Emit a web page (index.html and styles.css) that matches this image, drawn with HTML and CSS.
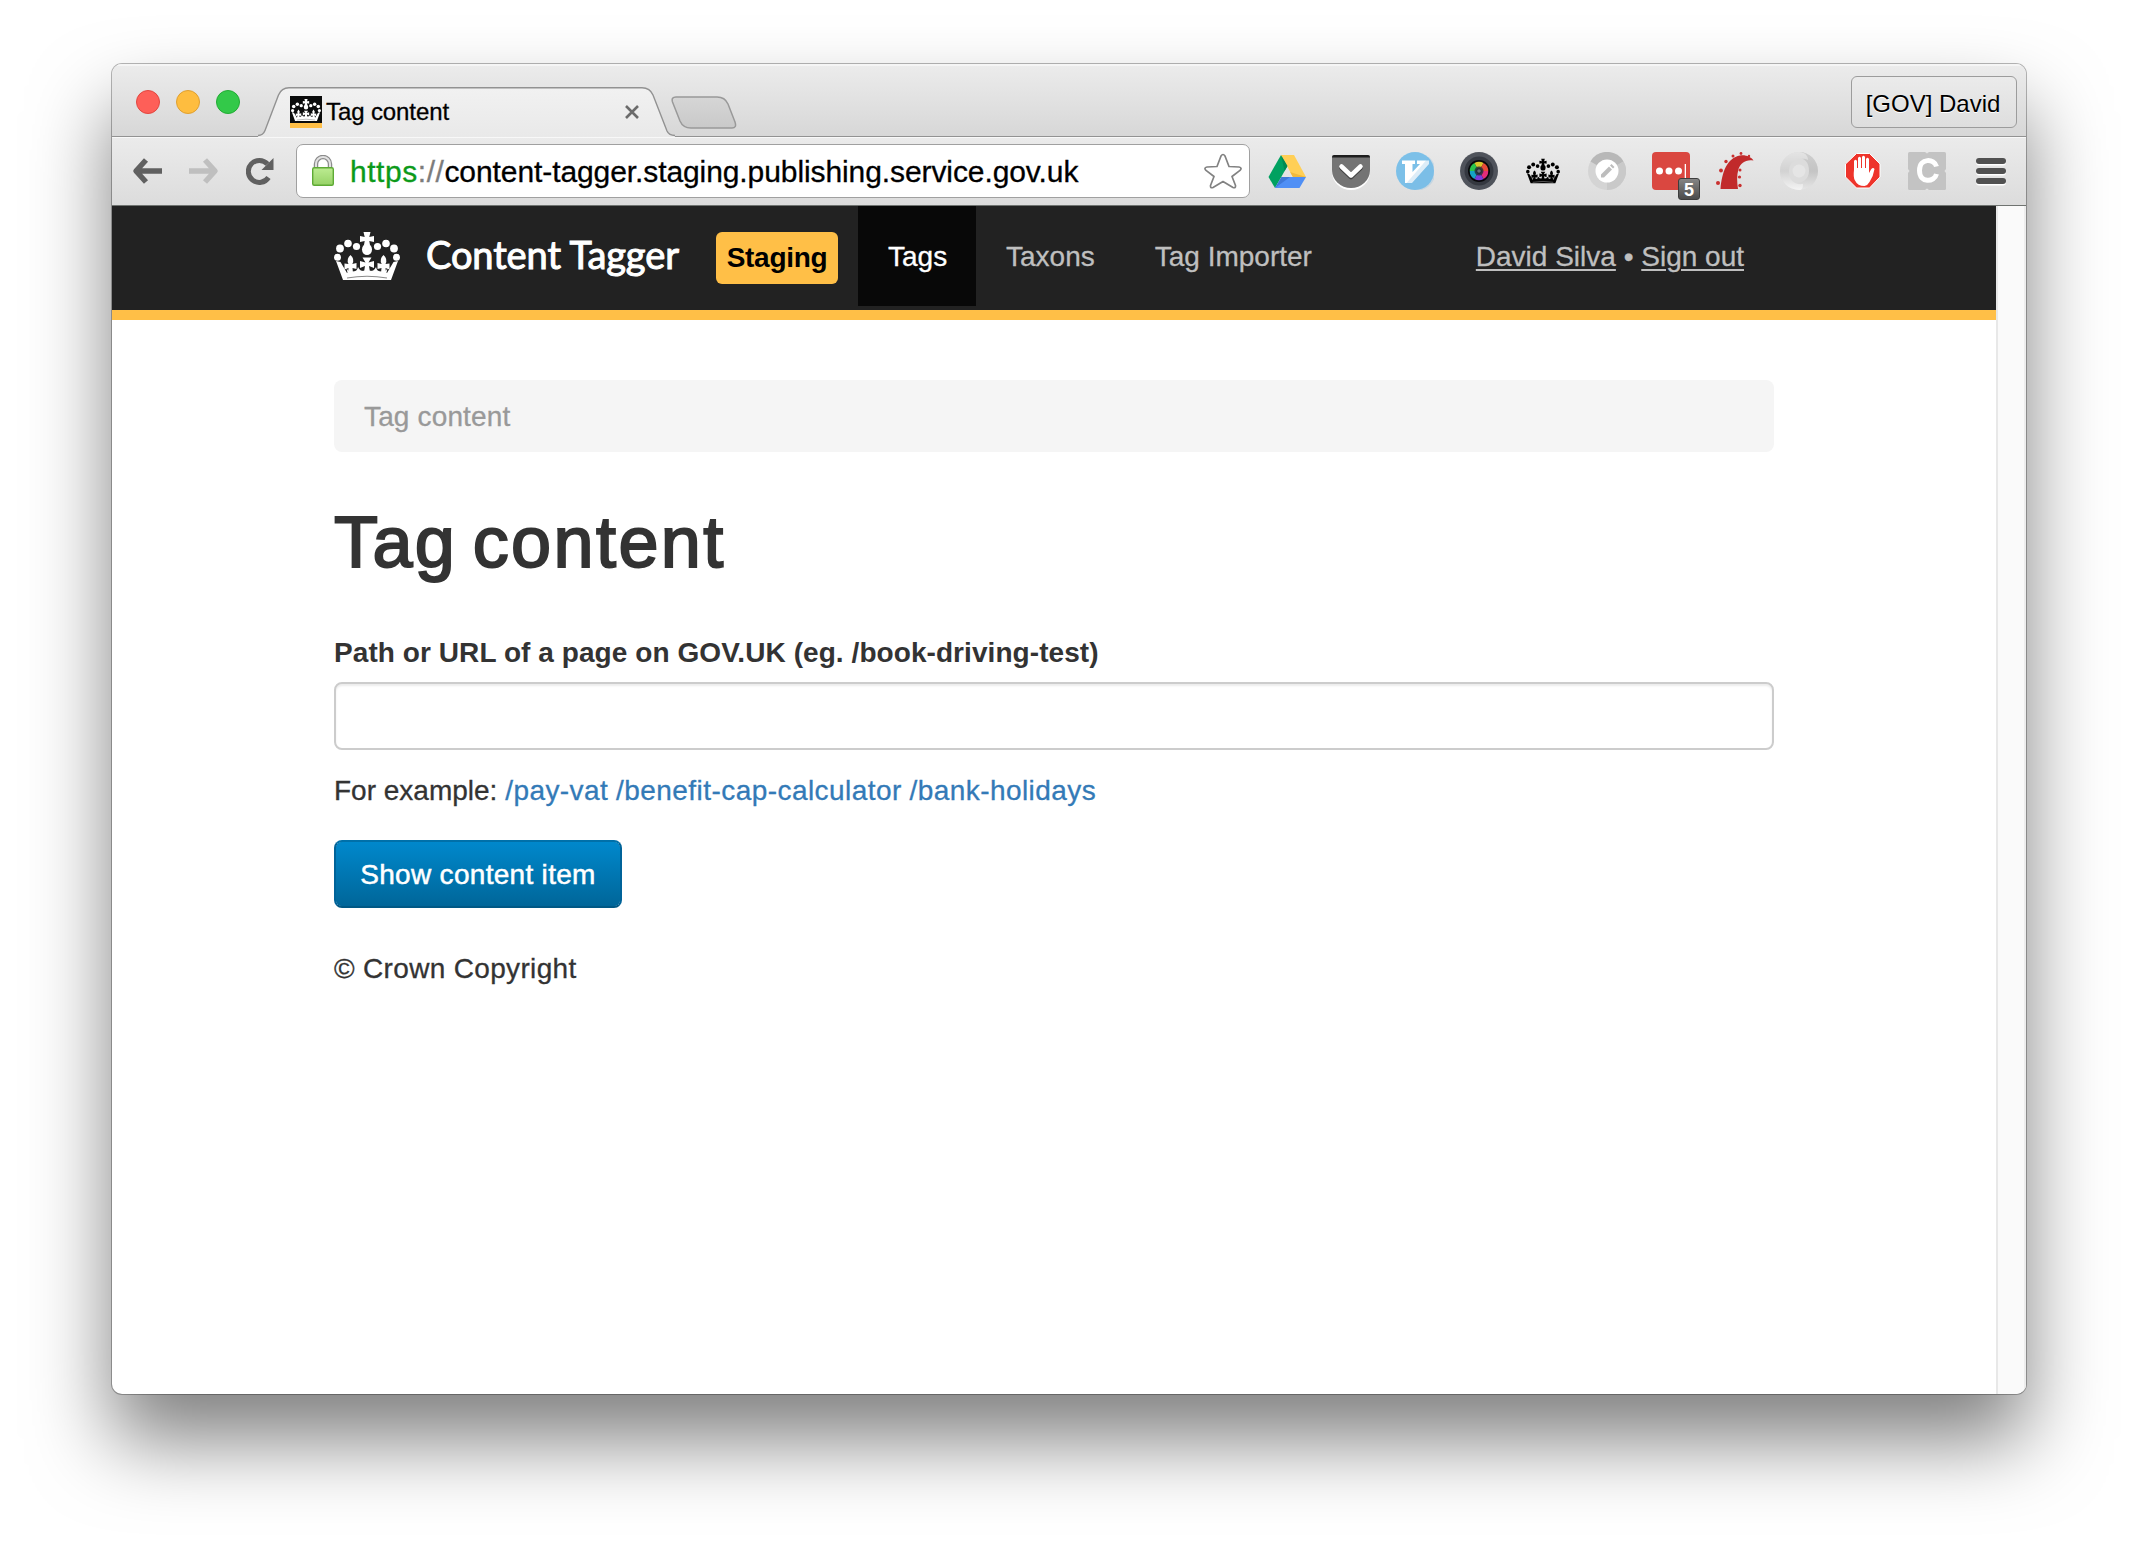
FILE: index.html
```html
<!DOCTYPE html>
<html lang="en">
<head>
<meta charset="utf-8">
<title>Tag content</title>
<link rel="stylesheet" href="styles.css">
</head>
<body>
<svg class="defs" width="0" height="0" aria-hidden="true">
  <symbol id="crown" viewBox="0 0 66 48">
    <path d="M29.500 0h7l-1.200 5 4.700-1v6l-4.700-1 .700 4h-6l.700-4-4.700 1V4l4.700 1z"/>
    <ellipse cx="33" cy="17.500" rx="5" ry="5.500"/>
    <circle cx="22.500" cy="14.500" r="3.600"/><circle cx="43.500" cy="14.500" r="3.600"/>
    <circle cx="14" cy="11.500" r="3.800"/><circle cx="52" cy="11.500" r="3.800"/>
    <circle cx="6" cy="16.500" r="3.900"/><circle cx="60" cy="16.500" r="3.900"/>
    <circle cx="3.500" cy="25.300" r="3.500"/><circle cx="62.500" cy="25.300" r="3.500"/>
    <path d="M2 29l4.500 1L13 41q20-5 40 0l6.500-11 4.500-1-7 19H9z"/>
    <path d="M16.500 23q4.500 4 1.800 9l4.200-1v6l-4-1 .5 5h-5l.5-5-4 1.500v-6l4 .500q-2.500-5 2-9zM49.500 23q-4.500 4-1.800 9l-4.200-1v6l4-1-.5 5h5l-.5-5 4 1.500v-6l-4 .500q2.500-5-2-9z"/>
    <path d="M28.500 25.500h9l-3 5 5.500-1.500v7L35 34l1 6h-6l1-6-5 2v-7l5.500 1.500z"/>
    <path d="M12 34q1 6 6 5.500 5 .5 6-4.500 2 5 9 4.500 7 .5 9-4.500 1 5 6 4.500 5 .5 6-5.500l-2 9H14z"/>
    <path class="crown-slot" d="M13 46q20-3.500 40 0"/>
  </symbol>
</svg>
<div class="window">
  <header class="titlebar">
    <div class="lights"><i class="light red"></i><i class="light amber"></i><i class="light green"></i></div>
    <div class="tab">
      <svg class="tab-shape" width="418" height="50" viewBox="0 0 418 50">
        <defs><linearGradient id="tabfill" x1="0" y1="0" x2="0" y2="1"><stop offset="0" stop-color="#f1f1f1"/><stop offset="1" stop-color="#e9e9e9"/></linearGradient></defs>
        <path d="M0 50v-1.500q5 0 7-5L20.500 8Q23.500.700 31 .700H384q8 0 11 7.300l14 36q2 4.500 8 4.500V50z" fill="url(#tabfill)"/>
        <path d="M0 48.500q5 0 7-5L20.500 8Q23.500.700 31 .700H384q8 0 11 7.300l14 36q2 4.500 8 4.500" fill="none" stroke="#929292" stroke-width="1.400"/>
      </svg>
      <span class="favicon"><svg width="30" height="24"><use href="#crown"/></svg></span>
      <span class="tab-title">Tag content</span>
      <svg class="tab-close" width="14" height="14" viewBox="0 0 14 14"><path d="M1 1l12 12m0-12L1 13" stroke="#6b6b6b" stroke-width="2.600"/></svg>
    </div>
    <svg class="new-tab" width="66" height="34" viewBox="0 0 66 34">
      <defs><linearGradient id="newfill" x1="0" y1="0" x2="0" y2="1"><stop offset="0" stop-color="#d6d6d6"/><stop offset="1" stop-color="#c9c9c9"/></linearGradient></defs>
      <path d="M5 1H46q8 0 11 7l7 18q2 6-3 6H20q-8 0-11-7L1.500 6Q0 1 5 1z" fill="url(#newfill)" stroke="#999" stroke-width="1.500"/>
    </svg>
    <button class="profile">[GOV] David</button>
  </header>

  <div class="toolbar">
    <svg class="back" width="32" height="28" viewBox="0 0 32 28"><path d="M14 3L4 14l10 11M4 14h26" fill="none" stroke="#606060" stroke-width="5.500" stroke-linejoin="round"/></svg>
    <svg class="forward" width="32" height="28" viewBox="0 0 32 28"><path d="M18 3l10 11-10 11M28 14H2" fill="none" stroke="#bfbfbf" stroke-width="5.500" stroke-linejoin="round"/></svg>
    <svg class="reload" width="28" height="28" viewBox="0 0 28 28"><path d="M22.500 20.500a11 11 0 1 1-1-13.500" fill="none" stroke="#606060" stroke-width="5"/><path d="M27.500 1v12H15.500z" fill="#606060"/></svg>
    <div class="address">
      <svg class="lock" width="24" height="32" viewBox="0 0 24 32">
        <defs><linearGradient id="lockfill" x1="0" y1="0" x2="0" y2="1"><stop offset="0" stop-color="#bdec92"/><stop offset="1" stop-color="#96d266"/></linearGradient></defs>
        <path d="M5 13V9a7 7 0 0 1 14 0v4" fill="none" stroke="#8c8c8c" stroke-width="4.500"/>
        <path d="M5 13V9a7 7 0 0 1 14 0v4" fill="none" stroke="#e2e2e2" stroke-width="2"/>
        <rect x="1.700" y="12.700" width="20.600" height="17.600" rx="1.500" fill="url(#lockfill)" stroke="#5eaa35" stroke-width="1.400"/>
      </svg>
      <span class="url"><span class="scheme">https</span><span class="slashes">://</span>content-tagger.staging.publishing.service.gov.uk</span>
      <svg class="star" width="38" height="36" viewBox="0 0 38 36"><path d="M17 3q2-3 4 0l4 10.500 10 .5q3.500.7 1 3.300L28 23.500l3.500 9q.3 3-2.500 2L19 28.500 9 34.500q-2.800 1-2.500-2l3.500-9L2 17.300Q-.5 14.700 3 14l10-.5z" fill="#fff" stroke="#828282" stroke-width="1.700" stroke-linejoin="round"/></svg>
    </div>
    <div class="extensions">
      <svg width="38" height="38" viewBox="0 0 38 38"><path d="M13 3L.500 25 7 36l12.500-22z" fill="#00a160"/><path d="M13 3h13l12 22H25z" fill="#ffcf56"/><path d="M13.500 25H38l-6.500 11H7z" fill="#4f8ff5"/><path d="M13.500 25L7 36l15-11z" fill="#3e78d8"/><path d="M13 3l6.500 11-3 5z" fill="#008a52"/><path d="M25 25h13L22 20z" fill="#f0b93e"/></svg>
      <svg width="38" height="38" viewBox="0 0 38 38"><path d="M0 20a19 18 0 0 0 38 0z" fill="#fff"/><path d="M2 3h34q2 0 2 2v13a19 18 0 0 1-38 0V5q0-2 2-2z" fill="#747474"/><path d="M2 3h34q2 0 2 2.500H0Q0 3 2 3z" fill="#1d1d1d"/><path d="M9.500 16l9.500 9 9.500-9" fill="none" stroke="#444" stroke-width="4.500" stroke-linecap="round" stroke-linejoin="round"/><path d="M9.500 14.500l9.500 9 9.500-9" fill="none" stroke="#fff" stroke-width="4.500" stroke-linecap="round" stroke-linejoin="round"/></svg>
      <svg width="38" height="38" viewBox="0 0 38 38"><circle cx="19" cy="19" r="19" fill="#7cc0e8"/><path d="M6 8.500h13v3.500h-2.500v8L24 12h-3V8.500h12v3.500L16 31H9V12H6z" fill="#fff"/><path d="M33 5a19 19 0 0 1-25 29z" fill="#76b9e2" opacity=".25"/></svg>
      <svg width="38" height="38" viewBox="0 0 38 38"><circle cx="19" cy="19" r="19" fill="#4f535b"/><circle cx="19" cy="19" r="14.500" fill="#343840"/><circle cx="19" cy="19" r="11" fill="#08080a"/><g fill="none" stroke-width="6.500"><path d="M13 19a6 6 0 0 1 3-5.200" stroke="#28c44c"/><path d="M16 13.800a6 6 0 0 1 6 0" stroke="#d8c52c"/><path d="M22 13.800a6 6 0 0 1 3 5.200" stroke="#e84a38"/><path d="M25 19a6 6 0 0 1-3 5.200" stroke="#e42c78"/><path d="M22 24.200a6 6 0 0 1-6 0" stroke="#7a3bd8"/><path d="M16 24.200a6 6 0 0 1-3-5.200" stroke="#16a3c5"/></g><circle cx="19" cy="19" r="4.500" fill="#26303a" opacity=".85"/><circle cx="19" cy="19" r="1.800" fill="#687078"/></svg>
      <svg class="crown-dark" width="38" height="38" viewBox="0 0 38 38"><use href="#crown" x="2" y="5" width="34" height="28"/></svg>
      <svg width="38" height="38" viewBox="0 0 38 38"><circle cx="19" cy="19" r="19" fill="#d4d4d4"/><path d="M19 19L2.500 9.500a19 19 0 0 1 33 0z" fill="#b8b8b8"/><path d="M19 19l16.500-9.500A19 19 0 0 1 19 38z" fill="#c9c9c9"/><circle cx="19" cy="19" r="11.500" fill="#fff"/><path d="M13 22.500l8-8 3 3-8 8h-3zM22 13.500l1.500-1.500 3 3-1.500 1.500z" fill="#bdbdbd"/></svg>
      <div class="lastpass"><svg width="38" height="38" viewBox="0 0 38 38"><rect width="38" height="38" rx="4" fill="#da4740"/><g fill="#fff"><circle cx="7.500" cy="19" r="3.500"/><circle cx="17" cy="19" r="3.500"/><circle cx="26.500" cy="19" r="3.500"/><rect x="32.700" y="12" width="1.300" height="14"/></g></svg><span class="count">5</span></div>
      <svg width="38" height="38" viewBox="0 0 38 38"><path d="M4.500 37C6 20 11 6 24 3.500c6-.8 11 1.500 13.500 5C30 7 24.500 11 22.500 17c-2 7-1.500 13-.5 20z" fill="#c12a2b"/><g fill="#c9302f"><circle cx="2" cy="31" r="2"/><circle cx="5" cy="18.500" r="1.900"/><circle cx="10" cy="9.500" r="1.700"/><circle cx="17" cy="4" r="1.500"/><circle cx="25" cy="1.500" r="1.400"/><circle cx="33" cy="4" r="1.200"/><circle cx="24" cy="18" r="1.500"/><circle cx="23.500" cy="25" r="1.600"/><circle cx="24" cy="33.500" r="1.700"/></g></svg>
      <svg width="38" height="38" viewBox="0 0 38 38">
        <defs>
          <linearGradient id="swirlA" x1="0" y1="0" x2="0" y2="1"><stop offset="0" stop-color="#cfcfcf"/><stop offset=".5" stop-color="#c4c4c4"/><stop offset="1" stop-color="#e6e6e6"/></linearGradient>
          <linearGradient id="swirlB" x1="0" y1="0" x2="0" y2="1"><stop offset="0" stop-color="#e4e4e4"/><stop offset=".5" stop-color="#d2d2d2"/><stop offset="1" stop-color="#f4f4f4"/></linearGradient>
        </defs>
        <circle cx="19" cy="19" r="12.500" fill="none" stroke="#dcdcdc" stroke-width="13"/>
        <path d="M19 0a19 19 0 0 1 0 38c-6 0-9-4-9-8 5 3 19 1 19-11C29 10 24 5 15 6c0-4 1-6 4-6z" fill="url(#swirlA)"/>
        <path d="M19 38a19 19 0 0 1 0-38c6 0 9 4 9 8C23 5 9 7 9 19c0 9 5 14 14 13 0 4-1 6-4 6z" fill="url(#swirlB)"/>
        <circle cx="19" cy="19" r="6.500" fill="#e5e5e5"/>
      </svg>
      <svg width="38" height="38" viewBox="0 0 38 38"><path d="M12.500 1.500h13l10.500 10.500v13L25.500 36h-13L1.500 25V12z" fill="#ee342b" stroke="#fff" stroke-width="1"/><path d="M10 18V9q1.500-2.500 3 0v7h1V6q1.500-2.500 3 0v10h1V5q1.500-2.500 3 0v11h1V7q1.500-2.500 3 0v14l2-3.500q2-2.500 3.500-.5-1 7-5 13-1.500 3-5 4-7 0-9.500-5.500-2-3-1-10.500z" fill="#fff"/></svg>
      <svg width="38" height="38" viewBox="0 0 38 38"><rect width="38" height="38" rx="1.500" fill="#c3c3c3"/><path d="M28.500 14.500c-2-8-17-9-17 4s15 12 17 3.500" fill="none" stroke="#fff" stroke-width="5"/><path d="M17 0h4l-2 1.500zM17 38h4l-2-1.500zM0 17v4l1.500-2zM38 17v4l-1.500-2z" fill="#e3e3e3"/></svg>
      <svg width="38" height="38" viewBox="0 0 38 38"><g fill="#fff"><rect x="4" y="7.500" width="30" height="6" rx="3"/><rect x="4" y="17.500" width="30" height="6" rx="3"/><rect x="4" y="27.500" width="30" height="6" rx="3"/></g><g fill="#515151"><rect x="4" y="6" width="30" height="6" rx="3"/><rect x="4" y="16" width="30" height="6" rx="3"/><rect x="4" y="26" width="30" height="6" rx="3"/></g></svg>
    </div>
  </div>

  <div class="viewport">
    <div class="page">
      <nav class="navbar">
        <a class="brand"><svg class="brand-crown" width="66" height="48"><use href="#crown"/></svg><span class="brand-name">Content Tagger</span></a>
        <span class="environment">Staging</span>
        <ul class="nav"><li class="active">Tags</li><li>Taxons</li><li>Tag Importer</li></ul>
        <p class="account"><a>David Silva</a> • <a>Sign out</a></p>
      </nav>
      <main class="container">
        <div class="breadcrumb">Tag content</div>
        <h1>Tag content</h1>
        <label for="path">Path or URL of a page on GOV.UK (eg. /book-driving-test)</label>
        <input id="path" type="text">
        <p class="help">For example: <a>/pay-vat</a> <a>/benefit-cap-calculator</a> <a>/bank-holidays</a></p>
        <button class="submit">Show content item</button>
        <footer>© Crown Copyright</footer>
      </main>
    </div>
    <div class="scrollbar"></div>
  </div>
</div>
</body>
</html>
```
FILE: styles.css
```css
* { box-sizing: border-box; }
body {
  margin: 0;
  width: 2138px;
  height: 1554px;
  padding: 64px 112px;
  overflow: hidden;
  background: #fff;
  font: 28px/40px "Liberation Sans", Arial, sans-serif;
  color: #333;
}
.defs { position: absolute; }
svg { display: block; flex: none; }
.window {
  width: 1914px;
  height: 1330px;
  display: flex;
  flex-direction: column;
  border-radius: 10px;
  overflow: hidden;
  background: #fff;
  box-shadow: 0 0 0 1px rgba(0, 0, 0, .28), 0 46px 80px rgba(0, 0, 0, .5);
}

/* Window chrome */
.titlebar {
  flex: none;
  height: 73px;
  display: flex;
  align-items: flex-start;
  background: linear-gradient(#ececec, #d7d7d7);
  border-bottom: 1px solid #929292;
  box-shadow: inset 0 2px 0 #f5f5f5;
}
.lights { display: flex; gap: 16px; padding: 26px 0 0 24px; }
.light { width: 24px; height: 24px; border-radius: 50%; border: 1px solid; }
.red { background: #fe5f58; border-color: #e2463f; }
.amber { background: #febd3f; border-color: #e0a030; }
.green { background: #33c949; border-color: #22ac34; }
.tab {
  position: relative;
  width: 416px;
  height: 50px;
  margin: 23px 0 0 18px;
  padding: 9px 35px 0 32px;
  display: flex;
  color: #000;
}
.tab-shape { position: absolute; left: 0; top: 0; }
.favicon {
  position: relative;
  width: 32px;
  height: 32px;
  padding: 2px 1px;
  background: #0b0c0c;
  border-bottom: 5px solid #ffbf47;
  fill: #fff;
}
.tab-title { position: relative; margin-left: 4px; font-size: 24px; line-height: 32px; letter-spacing: -.1px; -webkit-text-stroke: .3px; }
.tab-close { position: relative; margin: 9px 0 0 auto; }
.new-tab { margin: 32px 0 0 -3px; }
.profile {
  width: 166px;
  height: 52px;
  margin: 12px 9px 0 auto;
  padding: 3px 2px 0 0;
  border: 1.5px solid #9c9c9c;
  border-radius: 6px;
  background: linear-gradient(#ebebeb, #dedede);
  font: 24px "Liberation Sans", Arial, sans-serif;
  color: #000;
  text-shadow: 0 1px 0 #fff;
}
.toolbar {
  flex: none;
  height: 69px;
  display: flex;
  align-items: flex-start;
  background: linear-gradient(#ebebeb, #dcdcdc);
  border-bottom: 1px solid #6f7370;
  box-shadow: inset 0 1px 0 #f8f8f8;
}
.back { margin: 20px 0 0 20px; }
.forward { margin: 20px 0 0 23px; }
.reload { margin: 20px 0 0 27px; }
.address {
  width: 954px;
  height: 54px;
  margin: 7px 5px 0 22px;
  padding: 0 7px 0 14px;
  display: flex;
  align-items: center;
  border: 1.5px solid #a0a0a0;
  border-radius: 7px;
  background: #fff;
}
.url { margin: 2px 0 0 15px; font-size: 30px; letter-spacing: -.09px; color: #000; white-space: nowrap; -webkit-text-stroke: .3px; }
.scheme { color: #0c9a1a; letter-spacing: .55px; }
.slashes { color: #7c7c7c; letter-spacing: .55px; }
.star { margin-left: auto; }
.extensions {
  display: grid;
  grid-template-columns: repeat(12, 64px);
  justify-items: center;
  padding-top: 15px;
}
.crown-dark { fill: #000; }
.crown-slot { fill: none; stroke: #8a8a8a; stroke-width: 1.2; }
.lastpass { position: relative; }
.count {
  position: absolute;
  left: 26px;
  top: 26px;
  width: 22px;
  height: 22px;
  border: 1px solid #3d3d3d;
  border-radius: 3px;
  background: linear-gradient(#858585, #4b4b4b);
  font-weight: bold;
  font-size: 18px;
  line-height: 22px;
  text-align: center;
  color: #fff;
}

/* Site */
.viewport { flex: 1; display: flex; min-height: 0; -webkit-text-stroke: .3px; }
.page { flex: 1; }
.scrollbar {
  width: 30px;
  background: #fafafa;
  border-left: 2px solid #e8e8e8;
  border-right: 2px solid #ededed;
}
.navbar {
  height: 114px;
  padding-left: 222px;
  display: flex;
  align-items: flex-start;
  background: #222;
  border-bottom: 10px solid #ffbf47;
  color: #bfbfbf;
}
.brand { display: flex; width: 382px; padding-top: 26px; color: #fff; fill: #fff; }
.brand-name {
  margin: -1px 0 0 26px;
  font: 38px/46px Lato, "Open Sans", sans-serif;
  letter-spacing: -.1px;
  white-space: nowrap;
  -webkit-text-stroke: 1px #fff;
}
.environment {
  width: 122px;
  height: 52px;
  margin-top: 26px;
  border-radius: 6px;
  background: #ffbf47;
  color: #000;
  font-weight: bold;
  line-height: 52px;
  text-align: center;
  letter-spacing: -.3px;
  -webkit-text-stroke: 0;
}
.nav { display: flex; margin: 0 0 0 20px; padding: 0; list-style: none; }
.nav li { height: 100px; padding: 31px 30px 0; white-space: nowrap; }
.nav .active { width: 118px; background: #080808; color: #fff; }
.account { margin: 31px 252px 0 auto; white-space: nowrap; }
.account a { text-decoration: underline; text-underline-offset: 3px; text-decoration-thickness: 2px; }
.container {
  width: 1440px;
  margin: 60px 0 0 222px;
  display: flex;
  flex-direction: column;
  align-items: flex-start;
}
.breadcrumb {
  width: 100%;
  height: 72px;
  padding: 17px 30px 15px;
  border-radius: 8px;
  background: #f5f5f5;
  color: #999;
  letter-spacing: .15px;
}
h1 {
  margin: 50px 0 51px;
  font-size: 72px;
  line-height: 80px;
  font-weight: normal;
  letter-spacing: 2.4px;
  word-spacing: -7px;
  -webkit-text-stroke: 2px #333;
}
label { font-weight: bold; white-space: nowrap; letter-spacing: .07px; -webkit-text-stroke: 0; }
input {
  width: 100%;
  height: 68px;
  margin: 9px 0 21px;
  border: 2px solid #ccc;
  border-radius: 8px;
  box-shadow: inset 0 2px 2px rgba(0, 0, 0, .075);
}
.help { margin: 0 0 29px; white-space: nowrap; }
.help a { color: #337ab7; letter-spacing: .44px; }
.submit {
  width: 288px;
  height: 68px;
  padding: 2px 0 0;
  border: 2px solid;
  border-color: #0070a9 #006399 #005885;
  border-radius: 8px;
  background: linear-gradient(#08c, #069) padding-box;
  background-color: #006da5;
  font: 28px "Liberation Sans", Arial, sans-serif;
  letter-spacing: .3px;
  color: #fff;
  -webkit-text-stroke: .5px #fff;
}
footer { margin-top: 41px; letter-spacing: .33px; }
```
